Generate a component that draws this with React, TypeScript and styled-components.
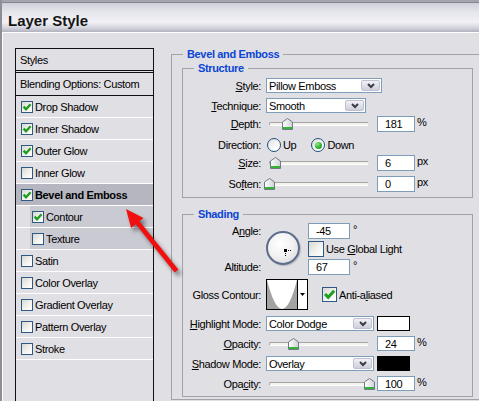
import React, { useId } from "react";
import styled, { createGlobalStyle } from "styled-components";

const GlobalStyle = createGlobalStyle`
  html, body {
    margin: 0;
    padding: 0;
    background: #e0dfe3;
  }
  body {
    font-family: "Liberation Sans", Arial, sans-serif;
    font-size: 11px;
  }
`;

const Window = styled.div`
  position: relative;
  width: 479px;
  height: 401px;
  overflow: hidden;
  box-sizing: border-box;
  display: flex;
  flex-direction: column;
  background: #e0dfe3;
  border-left: 2px solid #8e8e98;
  color: #000;
  letter-spacing: -0.35px;
`;

const TitleBar = styled.div`
  height: 33px;
  flex: none;
  box-sizing: border-box;
  padding: 12px 0 0 6px;
  border-bottom: 1px solid #fff;
  background: linear-gradient(
    to bottom,
    #a4a4ae 0,
    #a4a4ae 2px,
    #85858f 2px,
    #85858f 3px,
    #cfcfda 3px,
    #e5e5ec 12px,
    #f1f1f5 22px,
    #d3d3dc 28px,
    #a9a9b8 33px
  );
  font: bold 15px/17px "Liberation Sans", Arial, sans-serif;
  letter-spacing: 0;
  color: #141414;
`;

const Body = styled.div`
  flex: 1;
  display: flex;
  align-items: flex-start;
  border-left: 1px solid #fff;
  padding: 15px 0 0 12px;
`;

/* ---- effect list ---- */

const StyleList = styled.div`
  width: 139px;
  height: 372px;
  flex: none;
  box-sizing: border-box;
  display: flex;
  flex-direction: column;
  border: 1px solid #111;
  border-bottom: none;
`;

const ListHead = styled.div<{ $double?: boolean }>`
  height: ${p => (p.$double ? 21 : 22)}px;
  flex: none;
  display: flex;
  align-items: center;
  padding-left: 4px;
  border-bottom: ${p => (p.$double ? "3px double #111" : "1px solid #111")};
`;

const EffectRow = styled.div<{ $selected?: boolean; $sub?: boolean }>`
  height: 21px;
  flex: none;
  display: flex;
  padding-left: ${p => (p.$sub ? 14 : 0)}px;
  border-bottom: 1px solid #fff;
  background: ${p => (p.$selected ? "#b5b6c0" : "transparent")};
`;

const EffectCell = styled.div<{ $sub?: boolean }>`
  flex: 1;
  display: flex;
  align-items: center;
  gap: 2px;
  padding-left: ${p => (p.$sub ? 2 : 5)}px;
  background: ${p => (p.$sub ? "#cacad2" : "transparent")};
`;

const EffectName = styled.span<{ $bold?: boolean }>`
  font-weight: ${p => (p.$bold ? "bold" : "normal")};
  white-space: nowrap;
`;

const Box = styled.span<{ $size: number }>`
  width: ${p => p.$size}px;
  height: ${p => p.$size}px;
  flex: none;
  box-sizing: border-box;
  display: inline-flex;
  align-items: center;
  justify-content: center;
  border: 1px solid #2f5a86;
  background: linear-gradient(135deg, #d8d8d2 0%, #f4f4f1 60%, #fff 100%);
`;

const Check: React.FC<{ size: number }> = ({ size }) => (
  <svg width={size - 2} height={size - 2} viewBox="0 0 10 10">
    <path d="M1.6 4.6 L4 7.2 L8.6 2.2" fill="none" stroke="#1d9e1d" strokeWidth="2.3" />
  </svg>
);

/* ---- right side ---- */

const Side = styled.div`
  margin-left: 17px;
  flex: none;
`;

const Group = styled.div<{ $mt: number; $w: number; $pb: number }>`
  margin-top: ${p => p.$mt}px;
  width: ${p => p.$w}px;
  box-sizing: border-box;
  border: 1px solid #a2a2aa;
  padding-bottom: ${p => p.$pb}px;
`;

const GroupTitle = styled.div`
  width: fit-content;
  margin: -7px 0 0 11px;
  padding: 0 4px;
  line-height: 13px;
  background: #e0dfe3;
  color: #0b45d6;
  font-weight: bold;
`;

const GroupBody = styled.div`
  padding-left: 10px;
`;

const Row = styled.div<{ $h: number; $mt: number }>`
  height: ${p => p.$h}px;
  margin-top: ${p => p.$mt}px;
  display: flex;
  align-items: center;
  gap: 5px;
`;

const Label = styled.span`
  width: 78px;
  flex: none;
  text-align: right;
  white-space: nowrap;
  u {
    text-underline-offset: 1px;
  }
`;

const Controls = styled.div`
  height: 100%;
  display: flex;
  align-items: center;
`;

const Select = styled.div<{ $w: number }>`
  width: ${p => p.$w}px;
  height: 100%;
  box-sizing: border-box;
  display: flex;
  align-items: center;
  padding-left: 2px;
  border: 1px solid #7f9db9;
  background: #fff;
`;

const SelectText = styled.span`
  flex: 1;
  white-space: nowrap;
`;

const DropButton = styled.span`
  width: 19px;
  align-self: stretch;
  margin: 1px;
  box-sizing: border-box;
  display: flex;
  align-items: center;
  justify-content: center;
  border: 1px solid #c0c0d0;
  border-radius: 2px;
  background: linear-gradient(#f1f1f6, #cfcfdb);
`;

const Chevron = () => (
  <svg width="8" height="6" viewBox="0 0 8 6">
    <path d="M1 1 L4 4 L7 1" fill="none" stroke="#3c3c48" strokeWidth="2" />
  </svg>
);

const Field = styled.div<{ $w: number }>`
  width: ${p => p.$w}px;
  height: 100%;
  box-sizing: border-box;
  display: flex;
  align-items: center;
  padding-left: 7px;
  border: 1px solid #7f9db9;
  background: #fff;
`;

const Unit = styled.span<{ $ml?: number }>`
  margin-left: ${p => p.$ml ?? 2}px;
  align-self: flex-start;
  line-height: 13px;
`;

const Slider = styled.div`
  position: relative;
  width: 111px;
  height: 100%;
  flex: none;
  display: flex;
  align-items: center;
`;

const Track = styled.div`
  width: 100px;
  height: 4px;
  margin-left: 3px;
  box-sizing: border-box;
  border: 1px solid;
  border-color: #a4a4a4 #e6e6e6 #fff #a4a4a4;
  border-radius: 2px;
  background: #f3f2ed;
`;

const ThumbWrap = styled.span`
  position: absolute;
  top: calc(50% - 6px);
  width: 11px;
  height: 12px;
`;

const Thumb: React.FC<{ at: number }> = ({ at }) => {
  const id = useId();
  return (
    <ThumbWrap style={{ left: 3 + at * 100 - 5.5 }}>
      <svg width="11" height="12" viewBox="0 0 11 12">
        <defs>
          <linearGradient id={id} x1="0" y1="0" x2="1" y2="0">
            <stop offset="0" stopColor="#fff" />
            <stop offset="1" stopColor="#cfd1d6" />
          </linearGradient>
        </defs>
        <path d="M0.5 4 L5.5 0.5 L10.5 4 L10.5 11.5 L0.5 11.5 Z" fill={`url(#${id})`} stroke="#6f7a88" />
        <rect x="1" y="9" width="9" height="2" fill="#35b335" />
      </svg>
    </ThumbWrap>
  );
};

const Radio = styled.span`
  width: 14px;
  height: 14px;
  flex: none;
  box-sizing: border-box;
  display: flex;
  align-items: center;
  justify-content: center;
  border: 1px solid #1f4f7e;
  border-radius: 50%;
  background: linear-gradient(135deg, #dcdcd7, #fff 70%);
`;

const RadioDot = styled.span`
  width: 7px;
  height: 7px;
  border-radius: 50%;
  background: radial-gradient(circle at 35% 30%, #8ee58e, #2fb42f 55%, #168016);
`;

const Option = styled.span<{ $ml?: number; $mr?: number }>`
  display: flex;
  align-items: center;
  gap: 2px;
  margin-left: ${p => p.$ml ?? 0}px;
  margin-right: ${p => p.$mr ?? 0}px;
`;

const AngleGrid = styled.div`
  margin-top: 2px;
  display: grid;
  grid-template-columns: 78px 37px auto;
  grid-template-rows: 16px 16px 16px;
  column-gap: 5px;
  row-gap: 2px;
  align-items: center;
`;

const Dial = styled.div`
  grid-column: 2;
  grid-row: 1 / 4;
  align-self: start;
  margin-top: 8px;
  width: 34px;
  height: 34px;
  box-sizing: border-box;
  border: 2px solid #5d6b8c;
  border-radius: 50%;
  background: radial-gradient(circle at 40% 35%, #fff 0%, #f1f1f1 50%, #d2d2d8 100%);
  box-shadow: 1px 1px 1px rgba(0, 0, 0, 0.18);
`;

const Cell = styled.div<{ $row: number }>`
  grid-column: 3;
  grid-row: ${p => p.$row};
  height: 100%;
  display: flex;
  align-items: center;
`;

const GridLabel = styled(Label)<{ $row: number }>`
  grid-column: 1;
  grid-row: ${p => p.$row};
`;

const CheckLabel = styled.span`
  margin-left: 2px;
  white-space: nowrap;
`;

const ContourPreview = styled.div`
  width: 42px;
  height: 31px;
  box-sizing: border-box;
  display: flex;
  border: 1px solid #000;
  background: #fff;
`;

const CurveArea = styled.div`
  width: 30px;
  flex: none;
  border-right: 1px solid #000;
`;

const ArrowArea = styled.div`
  flex: 1;
  display: flex;
  align-items: center;
  justify-content: center;
`;

const AliasOption = styled.div`
  align-self: flex-start;
  margin: 8px 0 0 14px;
  display: flex;
  align-items: center;
`;

const Swatch = styled.div<{ $color: string }>`
  width: 33px;
  height: 100%;
  margin-left: 3px;
  box-sizing: border-box;
  border: 1px solid #000;
  background: ${p => p.$color};
`;

const Pointer = styled.svg`
  position: absolute;
  left: 108px;
  top: 200px;
  overflow: visible;
  filter: drop-shadow(3px 4px 2px rgba(0, 0, 0, 0.45));
  pointer-events: none;
`;

type Effect = { name: string; on: boolean; selected?: boolean; sub?: boolean };

const effects: Effect[] = [
  { name: "Drop Shadow", on: true },
  { name: "Inner Shadow", on: true },
  { name: "Outer Glow", on: true },
  { name: "Inner Glow", on: false },
  { name: "Bevel and Emboss", on: true, selected: true },
  { name: "Contour", on: true, sub: true },
  { name: "Texture", on: false, sub: true },
  { name: "Satin", on: false },
  { name: "Color Overlay", on: false },
  { name: "Gradient Overlay", on: false },
  { name: "Pattern Overlay", on: false },
  { name: "Stroke", on: false },
];

const SliderField: React.FC<{ at: number; value: string; unit: string }> = ({ at, value, unit }) => (
  <Controls>
    <Slider>
      <Track />
      <Thumb at={at} />
    </Slider>
    <Field $w={38}>{value}</Field>
    <Unit>{unit}</Unit>
  </Controls>
);

const Dropdown: React.FC<{ w: number; text: string }> = ({ w, text }) => (
  <Select $w={w}>
    <SelectText>{text}</SelectText>
    <DropButton>
      <Chevron />
    </DropButton>
  </Select>
);

export default function App() {
  return (
    <>
      <GlobalStyle />
      <Window>
        <TitleBar>Layer Style</TitleBar>
        <Body>
          <StyleList>
            <ListHead $double>Styles</ListHead>
            <ListHead>Blending Options: Custom</ListHead>
            {effects.map(e => (
              <EffectRow key={e.name} $selected={e.selected} $sub={e.sub}>
                <EffectCell $sub={e.sub}>
                  <Box $size={12}>{e.on && <Check size={12} />}</Box>
                  <EffectName $bold={e.selected}>{e.name}</EffectName>
                </EffectCell>
              </EffectRow>
            ))}
          </StyleList>

          <Side>
            <Group $mt={6} $w={320} $pb={2}>
              <GroupTitle>Bevel and Emboss</GroupTitle>
              <GroupBody>
                <Group $mt={7} $w={291} $pb={5}>
                  <GroupTitle>Structure</GroupTitle>
                  <Row $h={15} $mt={3}>
                    <Label><u>S</u>tyle:</Label>
                    <Controls>
                      <Dropdown w={116} text="Pillow Emboss" />
                    </Controls>
                  </Row>
                  <Row $h={15} $mt={5}>
                    <Label><u>T</u>echnique:</Label>
                    <Controls>
                      <Dropdown w={100} text="Smooth" />
                    </Controls>
                  </Row>
                  <Row $h={16} $mt={3}>
                    <Label><u>D</u>epth:</Label>
                    <SliderField at={0.181} value="181" unit="%" />
                  </Row>
                  <Row $h={16} $mt={5}>
                    <Label>Direction:</Label>
                    <Controls>
                      <Option $ml={1} $mr={15}>
                        <Radio />
                        Up
                      </Option>
                      <Option>
                        <Radio>
                          <RadioDot />
                        </Radio>
                        Down
                      </Option>
                    </Controls>
                  </Row>
                  <Row $h={16} $mt={2}>
                    <Label><u>S</u>ize:</Label>
                    <SliderField at={0.06} value="6" unit="px" />
                  </Row>
                  <Row $h={16} $mt={5}>
                    <Label>So<u>f</u>ten:</Label>
                    <SliderField at={0} value="0" unit="px" />
                  </Row>
                </Group>

                <Group $mt={16} $w={291} $pb={5}>
                  <GroupTitle>Shading</GroupTitle>
                  <AngleGrid>
                    <GridLabel $row={1}>A<u>n</u>gle:</GridLabel>
                    <Dial>
                      <svg width="30" height="30" viewBox="0 0 30 30">
                        <rect x="16" y="16" width="3" height="3" fill="#000" />
                        <path d="M20 17.5 H24 M17.5 20 V24" stroke="#000" strokeWidth="1" strokeDasharray="1 1" />
                      </svg>
                    </Dial>
                    <Cell $row={1}>
                      <Field $w={42}>-45</Field>
                      <Unit $ml={3}>°</Unit>
                    </Cell>
                    <Cell $row={2}>
                      <Box $size={16} />
                      <CheckLabel>Use <u>G</u>lobal Light</CheckLabel>
                    </Cell>
                    <GridLabel $row={3}>Altitude:</GridLabel>
                    <Cell $row={3}>
                      <Field $w={42}>67</Field>
                      <Unit $ml={3}>°</Unit>
                    </Cell>
                  </AngleGrid>
                  <Row $h={31} $mt={4}>
                    <Label>Gloss Contour:</Label>
                    <Controls>
                      <ContourPreview>
                        <CurveArea>
                          <svg width="30" height="29" viewBox="0 0 30 29" preserveAspectRatio="none">
                            <path d="M0 0 Q15 58 30 0 L30 29 L0 29 Z" fill="#a3a3a3" />
                          </svg>
                        </CurveArea>
                        <ArrowArea>
                          <svg width="5" height="3" viewBox="0 0 5 3">
                            <path d="M0 0 H5 L2.5 3 Z" fill="#000" />
                          </svg>
                        </ArrowArea>
                      </ContourPreview>
                      <AliasOption>
                        <Box $size={15}>
                          <Check size={15} />
                        </Box>
                        <CheckLabel>Anti-a<u>l</u>iased</CheckLabel>
                      </AliasOption>
                    </Controls>
                  </Row>
                  <Row $h={15} $mt={6}>
                    <Label><u>H</u>ighlight Mode:</Label>
                    <Controls>
                      <Dropdown w={108} text="Color Dodge" />
                      <Swatch $color="#fff" />
                    </Controls>
                  </Row>
                  <Row $h={15} $mt={5}>
                    <Label><u>O</u>pacity:</Label>
                    <SliderField at={0.24} value="24" unit="%" />
                  </Row>
                  <Row $h={15} $mt={5}>
                    <Label><u>S</u>hadow Mode:</Label>
                    <Controls>
                      <Dropdown w={108} text="Overlay" />
                      <Swatch $color="#000" />
                    </Controls>
                  </Row>
                  <Row $h={15} $mt={5}>
                    <Label>Opa<u>c</u>ity:</Label>
                    <SliderField at={1} value="100" unit="%" />
                  </Row>
                </Group>
              </GroupBody>
            </Group>
          </Side>
        </Body>

        {/* red call-out arrow pointing at the Bevel and Emboss entry */}
        <Pointer width="80" height="85" viewBox="0 0 80 85">
          <line x1="66.5" y1="71" x2="27" y2="22" stroke="#f01010" strokeWidth="4.8" />
          <polygon points="16,9 33.5,18.1 21.1,28.1" fill="#f01010" />
        </Pointer>
      </Window>
    </>
  );
}
